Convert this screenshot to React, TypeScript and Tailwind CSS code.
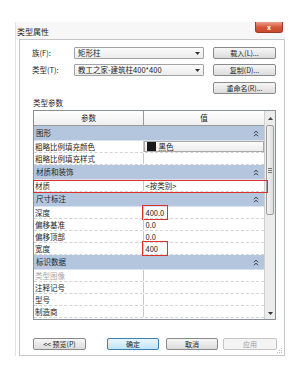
import React from "react";

type Row = {
  g?: string;
  n?: string;
  v?: string;
  swatch?: boolean;
  box?: "row" | "cell";
  dim?: boolean;
};

const rows: Row[] = [
  { g: "图形" },
  { n: "粗略比例填充颜色", v: "黑色", swatch: true },
  { n: "粗略比例填充样式" },
  { g: "材质和装饰" },
  { n: "材质", v: "<按类别>", box: "row" },
  { g: "尺寸标注" },
  { n: "深度", v: "400.0", box: "cell" },
  { n: "偏移基准", v: "0.0" },
  { n: "偏移顶部", v: "0.0" },
  { n: "宽度", v: "400", box: "cell" },
  { g: "标识数据" },
  { n: "类型图像", dim: true },
  { n: "注释记号" },
  { n: "型号" },
  { n: "制造商" },
];

const Chevrons = () => (
  <svg width="6" height="7" viewBox="0 0 6 7">
    <path d="M1 3.2 L3 1.2 L5 3.2 M1 6.2 L3 4.2 L5 6.2" stroke="#333" fill="none" strokeWidth="1" />
  </svg>
);

const Arrow = () => (
  <svg width="5" height="3" viewBox="0 0 5 3">
    <path d="M0 0 H5 L2.5 3 Z" fill="#333" />
  </svg>
);

const Btn: React.FC<{ label: string; w: string; primary?: boolean; disabled?: boolean }> = ({ label, w, primary, disabled }) => (
  <div
    className={`${w} h-[12px] rounded-[2px] border flex items-center justify-center text-[7px] leading-none ${
      primary
        ? "border-[#3c7fb1] bg-gradient-to-b from-[#eaf6fd] to-[#bee6fd] text-[#1e1e1e]"
        : disabled
        ? "border-[#c4c4c4] bg-[#f4f4f4] text-[#a0a0a0]"
        : "border-[#8a8a8a] bg-gradient-to-b from-[#f6f6f6] to-[#dcdcdc] text-[#1e1e1e]"
    }`}
  >
    {label}
  </div>
);

const Combo: React.FC<{ text: string }> = ({ text }) => (
  <div className="w-[130px] h-[12px] border border-[#a3a3a3] bg-gradient-to-b from-[#fbfbfb] to-[#ececec] rounded-[1px] flex items-center justify-between pl-[3px] pr-[3px]">
    <span className="text-[7.5px] leading-none">{text}</span>
    <Arrow />
  </div>
);

export default function App() {
  return (
    <div className="w-[305px] h-[369px] bg-white overflow-hidden font-['Noto_Sans_CJK_SC','Liberation_Sans',sans-serif] text-[#1e1e1e]">
      <div className="ml-[15px] mt-[22px] w-[270px] border-l border-[#e2e2e2]">
        {/* title bar */}
        <div className="h-[17px] bg-[#f7f7f7] flex items-start justify-between">
          <span className="text-[8px] leading-none pt-[6px] pl-[1px]">类型属性</span>
          <div className="w-[28px] h-[11px] mr-[2px] rounded-b-[3px] border border-t-0 border-[#9a3a26] bg-gradient-to-b from-[#e9a08c] via-[#d7573c] to-[#c8492f] flex items-center justify-center">
            <span className="text-white text-[7px] leading-none font-bold">x</span>
          </div>
        </div>

        {/* panel */}
        <div className="relative ml-[3px] w-[266px] h-[317px] border border-[#c6c6c6] bg-white pt-[7px]">
          <div className="flex flex-col gap-[5px]">
            <div className="flex items-center h-[12px]">
              <span className="w-[54px] pl-[12px] text-[7.5px] leading-none">族(F):</span>
              <Combo text="矩形柱" />
              <div className="ml-[9px]">
                <Btn label="载入(L)..." w="w-[63px]" />
              </div>
            </div>
            <div className="flex items-center h-[12px]">
              <span className="w-[54px] pl-[12px] text-[7.5px] leading-none">类型(T):</span>
              <Combo text="教工之家-建筑柱400*400" />
              <div className="ml-[9px]">
                <Btn label="复制(D)..." w="w-[63px]" />
              </div>
            </div>
            <div className="flex items-center h-[12px] mt-[1px] pl-[193px]">
              <Btn label="重命名(R)..." w="w-[63px]" />
            </div>
          </div>

          <div className="pl-[13px] mt-[4px] h-[10px] text-[7.5px] leading-[10px]">类型参数</div>

          {/* table */}
          <div className="ml-[13px] mt-[2px] w-[243px] h-[210px] border border-[#8a8f98] flex">
            <div className="w-[230px] flex flex-col">
              <div className="h-[15px] flex bg-gradient-to-b from-white to-[#efefef] border-b border-[#9a9a9a] text-[7.5px]">
                <div className="w-[110px] border-r border-[#9a9a9a] flex items-center justify-center">参数</div>
                <div className="flex-1 flex items-center justify-center">值</div>
              </div>
              {rows.map((r, i) =>
                r.g ? (
                  <div key={i} className="h-[15px] bg-[#b3c6de] border-b border-[#d9e2ee] flex items-center justify-between pl-[2px] pr-[5px] text-[7.5px] leading-none">
                    <span>{r.g}</span>
                    <Chevrons />
                  </div>
                ) : (
                  <div key={i} className="relative h-[12px] flex border-b border-dashed border-[#d4d4d4] text-[7.5px] leading-none">
                    <div className={`w-[110px] pl-[1px] flex items-center border-r border-[#c8c8c8] ${r.dim ? "text-[#a8a8a8]" : ""}`}>{r.n}</div>
                    <div
                      className={`relative flex-1 flex items-center pl-[1.5px] ${
                        r.swatch ? "bg-gradient-to-b from-[#fbfbfb] to-[#ededed] border border-[#a8a8a8]" : ""
                      }`}
                    >
                      {r.swatch && <span className="w-[9px] h-[9px] bg-[#1a1a1a] mr-[3px]" />}
                      <span>{r.v}</span>
                      {r.box === "cell" && (
                        <span className="absolute left-[-2px] top-[-2px] w-[26px] h-[15px] border-[1.5px] border-[#d9342b]" />
                      )}
                    </div>
                    {r.box === "row" && (
                      <span className="absolute left-[-1px] right-[-4px] top-0 bottom-[-2px] border-[1.5px] border-[#d9342b]" />
                    )}
                  </div>
                )
              )}
            </div>
            {/* scrollbar */}
            <div className="flex-1 border-l border-[#d0d0d0] bg-[#ececec] flex flex-col">
              <div className="h-[14px] flex items-center justify-center">
                <svg width="5" height="3" viewBox="0 0 5 3">
                  <path d="M0 3 H5 L2.5 0 Z" fill="#444" />
                </svg>
              </div>
              <div className="h-[90px] mx-[1px] rounded-[2px] border border-[#9e9e9e] bg-gradient-to-r from-[#f2f2f2] to-[#dedede] flex flex-col items-center justify-center gap-[1px]">
                <span className="w-[4px] h-px bg-[#777]" />
                <span className="w-[4px] h-px bg-[#777]" />
                <span className="w-[4px] h-px bg-[#777]" />
              </div>
              <div className="flex-1" />
              <div className="h-[12px] flex items-center justify-center">
                <Arrow />
              </div>
            </div>
          </div>

          {/* buttons */}
          <div className="flex pl-[13px] mt-[18px]">
            <Btn label="<< 预览(P)" w="w-[53px]" />
            <div className="ml-[21px]">
              <Btn label="确定" w="w-[52px]" primary />
            </div>
            <div className="ml-[7px]">
              <Btn label="取消" w="w-[52px]" />
            </div>
            <div className="ml-[5px]">
              <Btn label="应用" w="w-[54px]" disabled />
            </div>
          </div>

          <svg className="absolute right-[1px] bottom-[1px]" width="6" height="6" viewBox="0 0 6 6">
            <rect x="4" y="0" width="1" height="1" fill="#bbb" />
            <rect x="2" y="2" width="1" height="1" fill="#bbb" />
            <rect x="4" y="2" width="1" height="1" fill="#bbb" />
            <rect x="0" y="4" width="1" height="1" fill="#bbb" />
            <rect x="2" y="4" width="1" height="1" fill="#bbb" />
            <rect x="4" y="4" width="1" height="1" fill="#bbb" />
          </svg>
        </div>
      </div>
    </div>
  );
}
